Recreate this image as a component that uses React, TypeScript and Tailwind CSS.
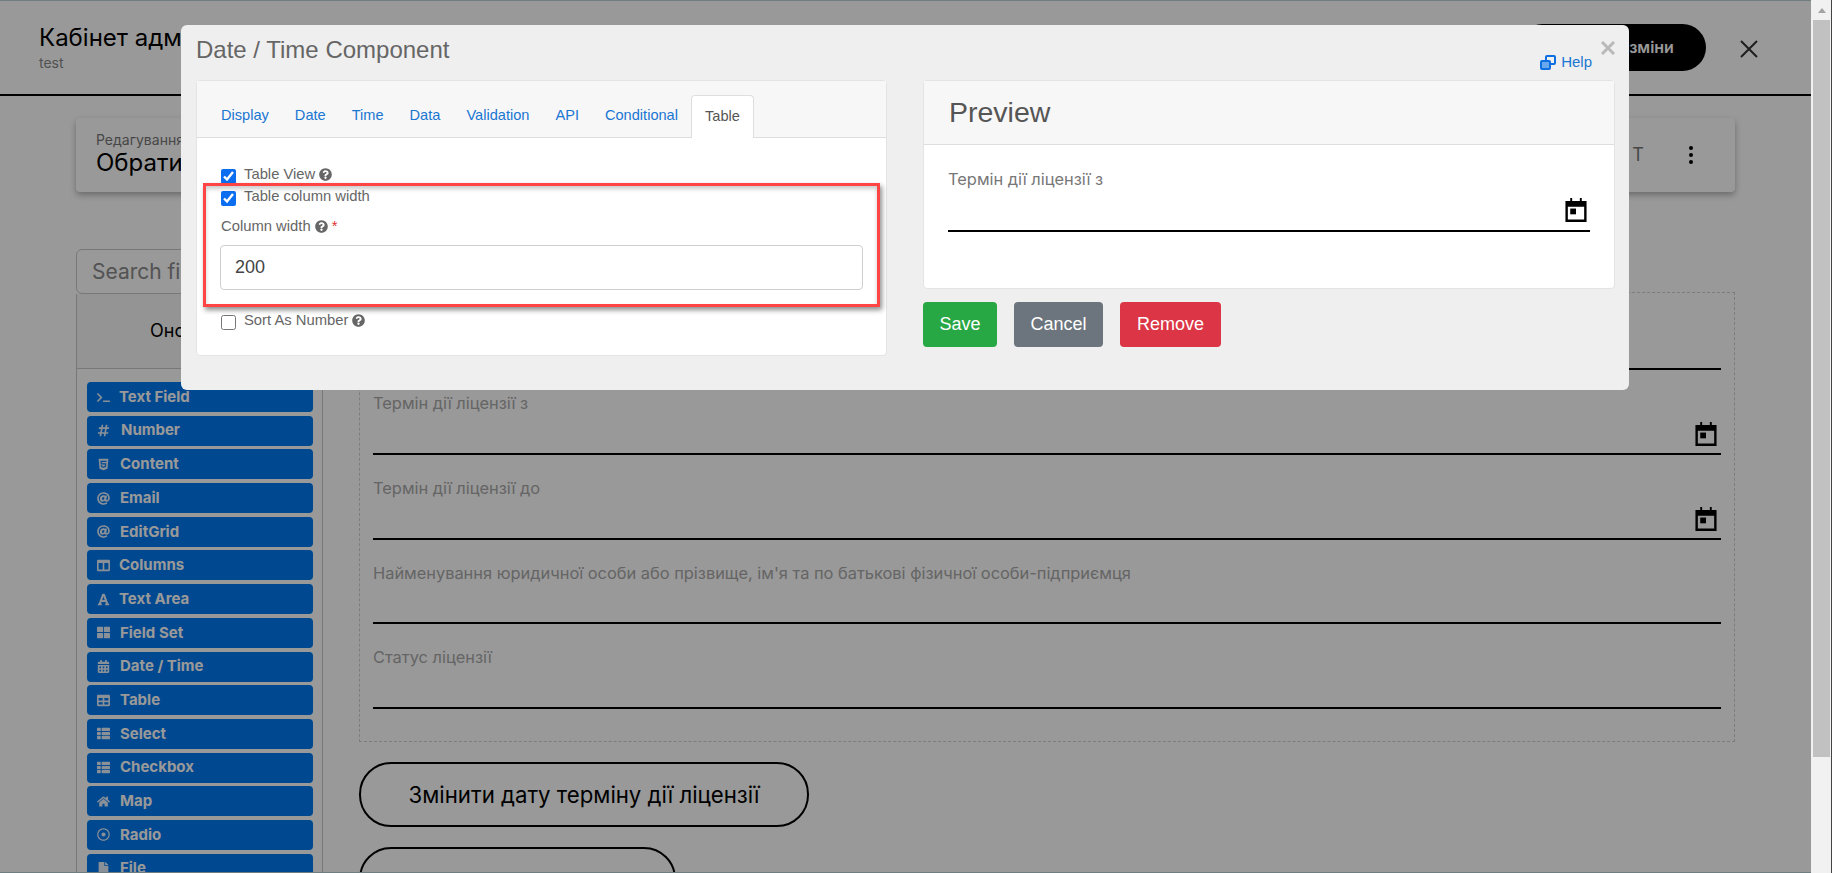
import React from "react";
import {
  FaTerminal, FaHashtag, FaHtml5, FaAt, FaColumns, FaFont, FaThLarge, FaCalendarAlt,
  FaTable, FaThList, FaHome, FaRegDotCircle, FaFile, FaQuestionCircle,
} from "react-icons/fa";

const PAGE_FONT = "font-['Inter','Noto_Sans',sans-serif]";

const palette = [
  { icon: FaTerminal, label: "Text Field", gap: "ml-[9px]" },
  { icon: FaHashtag, label: "Number", gap: "ml-[11px]" },
  { icon: FaHtml5, label: "Content", gap: "ml-[10px]" },
  { icon: FaAt, label: "Email", gap: "ml-[10px]" },
  { icon: FaAt, label: "EditGrid", gap: "ml-[10px]" },
  { icon: FaColumns, label: "Columns", gap: "ml-[9px]" },
  { icon: FaFont, label: "Text Area", gap: "ml-[9px]" },
  { icon: FaThLarge, label: "Field Set", gap: "ml-[10px]" },
  { icon: FaCalendarAlt, label: "Date / Time", gap: "ml-[10px]" },
  { icon: FaTable, label: "Table", gap: "ml-[10px]" },
  { icon: FaThList, label: "Select", gap: "ml-[10px]" },
  { icon: FaThList, label: "Checkbox", gap: "ml-[10px]" },
  { icon: FaHome, label: "Map", gap: "ml-[10px]" },
  { icon: FaRegDotCircle, label: "Radio", gap: "ml-[10px]" },
  { icon: FaFile, label: "File", gap: "ml-[10px]" },
];

function CalendarIcon({ className }: { className?: string }) {
  return (
    <svg viewBox="0 0 22 25" className={className} fill="#000">
      <path d="M5 0h2v3h8V0h2v3h5v22H0V3h5zM2.5 9v13.5h17V9z" fillRule="evenodd" />
      <rect x="5" y="11" width="6" height="6" />
    </svg>
  );
}

function Field({ label, calendar, height = "h-[85px]" }: { label: string; calendar?: boolean; height?: string }) {
  return (
    <div className={`flex flex-col ${height}`}>
      <div className="mt-[23px] h-5 text-[16.4px] leading-5 text-[#a8a8a8]">{label}</div>
      <div className="mt-auto flex h-[33px] items-start justify-end border-b-2 border-black pr-[4px]">
        {calendar && <CalendarIcon className="h-[24px] w-[22px]" />}
      </div>
    </div>
  );
}

function Hint() {
  return <FaQuestionCircle className="inline-block h-[13px] w-[13px] text-[#666]" />;
}

function Check({ label, checked, className }: { label: string; checked?: boolean; className?: string }) {
  return (
    <div className={`flex h-[22px] items-start ${className ?? ""}`}>
      <input type="checkbox" defaultChecked={checked} className="mt-[2px] h-[15px] w-[15px] accent-[#0b6ef0]" />
      <span className="ml-[8px] flex h-[14px] items-center gap-[4px] text-[14.8px] leading-[14px] text-[#666]">
        {label}
        {label !== "Table column width" && <Hint />}
      </span>
    </div>
  );
}

function Page() {
  return (
    <div className={`flex h-full flex-col ${PAGE_FONT}`}>
      <header className="flex h-[96px] shrink-0 items-center border-b-2 border-black pl-[39px] pr-[50px]">
        <div className="mt-[2px]">
          <div className="text-[24px] leading-[30px] text-black">Кабінет адміністратора</div>
          <div className="text-sm leading-[20px] text-[#888]">test</div>
        </div>
        <button className="ml-auto flex h-[47px] w-[187px] items-center justify-center rounded-full bg-black text-base font-semibold text-white">
          Зберегти зміни
        </button>
        <span className="ml-[31px] mt-[4px] flex h-[24px] w-[24px] items-center justify-center">
          <svg viewBox="0 0 18 18" className="h-[18px] w-[18px]" stroke="#333" strokeWidth="2"><path d="M1 1l16 16M17 1L1 17" /></svg>
        </span>
      </header>

      <div className="mx-[76px] mt-[22px] flex h-[74px] shrink-0 items-center justify-between rounded-[4px] bg-white pl-[20px] pr-[42px] shadow-[0_3px_6px_rgba(0,0,0,0.3)]">
        <div className="-mt-[2px]">
          <div className="text-sm leading-[18px] text-[#777]">Редагування форми</div>
          <div className="text-[24px] leading-[28px] text-black">Обрати ліцензію</div>
        </div>
        <div className="flex items-center gap-[42px]">
          <span className="text-lg tracking-[3px] text-[#777]">ТЕКСТ</span>
          <svg viewBox="0 0 4 18" className="h-[18px] w-[4px]" fill="#000">
            <circle cx="2" cy="2" r="2" /><circle cx="2" cy="9" r="2" /><circle cx="2" cy="16" r="2" />
          </svg>
        </div>
      </div>

      <div className="ml-[76px] mt-[57px] flex min-h-0 flex-1 overflow-hidden">
        <aside className="w-[247px] shrink-0">
          <div className="flex h-[45px] items-center rounded-[6px] border border-[#c8c8c8] pl-[15px] text-[21px] text-[#8a8a8a]">Search field(s)</div>
          <div className="border-x border-[#c8c8c8]">
            <div className="flex h-[75px] items-center border-b border-[#c8c8c8] bg-[#f7f7f7] pl-[73px] text-lg text-black">Оновити</div>
            <div className="flex flex-col gap-[3.7px] pl-[10px] pr-[9px] pt-[13px]">
              {palette.map((p) => (
                <div key={p.label} className="flex h-[30px] shrink-0 items-center rounded-[4px] bg-[#0078f0] pl-[10px] text-[15px] font-bold text-white">
                  <p.icon className="h-[13px] w-[13px] shrink-0 opacity-90" />
                  <span className={p.gap}>{p.label}</span>
                </div>
              ))}
            </div>
          </div>
        </aside>

        <section className="ml-[36px] w-[1376px] shrink-0 pt-[43px]">
          <div className="border border-dashed border-[#d0d0d0] pl-[13px] pr-[13px] pb-[32px]">
            <Field label="Номер ліцензії" height="h-[77px]" />
            <Field label="Термін дії ліцензії з" calendar />
            <Field label="Термін дії ліцензії до" calendar />
            <Field label="Найменування юридичної особи або прізвище, ім'я та по батькові фізичної особи-підприємця" height="h-[84px]" />
            <Field label="Статус ліцензії" />
          </div>
          <button className="mt-[20px] flex h-[65px] w-[450px] items-center justify-center rounded-[32px] border-2 border-black text-[22.2px] font-normal text-black">
            Змінити дату терміну дії ліцензії
          </button>
          <button className="mt-[20px] flex h-[65px] w-[317px] items-center justify-center rounded-[32px] border-2 border-black pt-[4px] text-[22.2px] font-normal text-black">
            Зупинити дію ліцензії
          </button>
        </section>
      </div>
    </div>
  );
}

function Modal() {
  const tabs = ["Display", "Date", "Time", "Data", "Validation", "API", "Conditional"];
  return (
    <div className="absolute left-[181px] top-[25px] h-[365px] w-[1448px] rounded-[6px] bg-[#efefef] pl-[15px] pr-[14px] font-['Liberation_Sans',Arial,sans-serif]">
      <div className="flex h-[55px] items-start">
        <h4 className="mt-[9px] text-[24px] leading-[32px] text-[#666]">Date / Time Component</h4>
        <div className="relative ml-auto h-full">
          <span className="absolute right-[23px] top-[29px] flex items-center gap-[5px] whitespace-nowrap text-[15px] leading-[16px] text-[#1976d2]">
            <svg viewBox="0 0 16 15" className="h-[15px] w-[16px]" fill="none" stroke="#0d6fe0" strokeWidth="2">
              <rect x="6" y="1" width="9" height="8" rx="1" />
              <rect x="1" y="6" width="9" height="8" rx="1" fill="#6aa8ee" />
            </svg>
            Help
          </span>
          <span className="absolute right-0 top-[16px]">
            <svg viewBox="0 0 14 14" className="h-[14px] w-[14px]" stroke="#b9b9b9" strokeWidth="3"><path d="M1 1l12 12M13 1L1 13" /></svg>
          </span>
        </div>
      </div>

      <div className="flex gap-[36px]">
        <div className="h-[276px] w-[691px] shrink-0 rounded-[4px] border border-[#e4e4e4] bg-white">
          <div className="flex h-[57px] items-end border-b border-[#dedede] bg-[#f7f7f7] pl-[11px]">
            {tabs.map((t) => (
              <span key={t} className="flex h-[42px] items-center px-[13px] text-[14.6px] text-[#1976d2]">{t}</span>
            ))}
            <span className="-mb-px flex h-[43px] items-center rounded-t-[4px] border border-b-0 border-[#dedede] bg-white px-[13px] text-[14.6px] text-[#555]">Table</span>
          </div>
          <div className="pl-[24px] pr-[23px] pt-[29px]">
            <Check label="Table View" checked />
            <Check label="Table column width" checked />
            <div className="mt-[7px] flex h-[16px] items-center gap-[4px] text-[14.8px] leading-[16px] text-[#666]">
              Column width <Hint /> <span className="text-[#d33]">*</span>
            </div>
            <input
              readOnly
              value="200"
              className="-ml-px mt-[11px] block h-[45px] w-[calc(100%+1px)] rounded-[4px] border border-[#cfcfcf] bg-white px-[14px] text-[18px] text-[#444]"
            />
            <Check label="Sort As Number" className="mt-[23px]" />
          </div>
        </div>

        <div className="w-[692px] shrink-0 self-start">
          <div className="rounded-[4px] border border-[#e4e4e4] bg-white">
            <div className="flex h-[64px] items-center border-b border-[#dedede] bg-[#f7f7f7] pl-[25px] text-[28.5px] text-[#555]">Preview</div>
            <div className="h-[143px] px-[24px]">
              <div className={`pt-[24px] text-[16.4px] leading-5 text-[#777] ${PAGE_FONT}`}>Термін дії ліцензії з</div>
              <div className="mt-[8px] flex h-[35px] items-start justify-end border-b-2 border-black pr-[3px] pt-[1px]">
                <CalendarIcon className="h-[24px] w-[22px]" />
              </div>
            </div>
          </div>
          <div className="mt-[13px] flex gap-[17px]">
            <button className="h-[45px] w-[74px] rounded-[4px] bg-[#28a745] text-[18px] text-white">Save</button>
            <button className="h-[45px] w-[89px] rounded-[4px] bg-[#6c757d] text-[18px] text-white">Cancel</button>
            <button className="h-[45px] w-[101px] rounded-[4px] bg-[#dc3545] text-[18px] text-white">Remove</button>
          </div>
        </div>
      </div>

      <div className="pointer-events-none absolute left-[22px] top-[158px] h-[124px] w-[677px] border-[3px] border-[#f44] shadow-[2px_3px_5px_rgba(0,0,0,0.45),inset_0_3px_4px_rgba(0,0,0,0.2)]" />
    </div>
  );
}

export default function App() {
  return (
    <div className="flex h-[873px] w-full overflow-hidden bg-white">
      <main className="relative w-[1811px] shrink-0 overflow-hidden bg-white">
        <Page />
        <div className="absolute inset-0 border-y border-[#6f7d80] bg-black/40" />
        <Modal />
      </main>
      <aside className="flex w-[21px] shrink-0 flex-col border-r border-[#444] bg-[#f1f1f1] pl-[2px] pr-[1px]">
        <div className="flex h-[20px] items-center justify-center">
          <span className="h-0 w-0 border-x-[4px] border-b-[5px] border-x-transparent border-b-[#a3a3a3]" />
        </div>
        <div className="h-[737px] bg-[#c1c1c1]" />
      </aside>
    </div>
  );
}
